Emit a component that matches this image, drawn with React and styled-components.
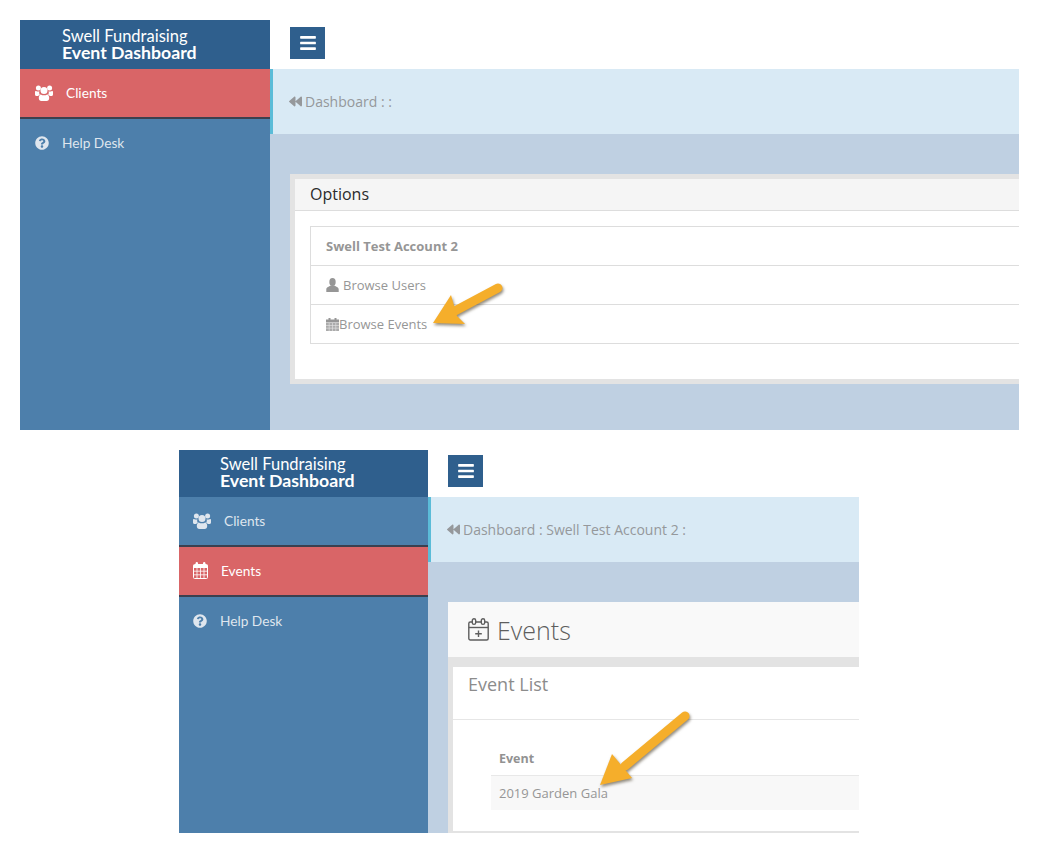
import React from "react";
import styled, { createGlobalStyle } from "styled-components";
import { FaQuestionCircle, FaBackward, FaBars } from "react-icons/fa";

const GlobalStyle = createGlobalStyle`
  html, body { margin: 0; padding: 0; background: #fff; }
  body { font-family: "Open Sans", "Liberation Sans", sans-serif; }
`;

const Page = styled.div`
  width: 1039px;
  height: 853px;
  padding-top: 20px;
  box-sizing: border-box;
  overflow: hidden;
`;

const Shot = styled.section`
  position: relative;
  display: grid;
  grid-template-columns: ${(p) => p.$side}px 1fr;
  width: ${(p) => p.$width}px;
  height: ${(p) => p.$height}px;
  margin-left: ${(p) => p.$left}px;
  margin-bottom: 20px;
  overflow: hidden;
`;

const Sidebar = styled.aside`
  background: #4d7fab;
  display: flex;
  flex-direction: column;
`;

const Brand = styled.div`
  height: ${(p) => p.$height}px;
  box-sizing: border-box;
  background: #2f5f8d;
  color: #fff;
  padding: ${(p) => p.$top + 1}px 0 0 ${(p) => p.$pad}px;
  font-family: Lato, "Liberation Sans", sans-serif;
  font-size: 16.5px;
  line-height: 17px;
  span { display: block; }
  strong { display: block; margin-top: -1px; font-weight: 700; font-size: 17.7px; }
`;

const NavItem = styled.div`
  height: 50px;
  box-sizing: border-box;
  display: flex;
  align-items: center;
  gap: 13px;
  padding: 0 0 1px ${(p) => p.$pad}px;
  font-family: Lato, "Liberation Sans", sans-serif;
  font-size: 13.7px;
  font-weight: 400;
  color: ${(p) => (p.$active ? "#fff" : "#dfe6ee")};
  background: ${(p) => (p.$active ? "#d96567" : "transparent")};
  border-bottom: 2px solid ${(p) => (p.$line ? "#3b404f" : "transparent")};
  svg { flex: none; }
`;

const Main = styled.main`
  display: flex;
  flex-direction: column;
  min-width: 0;
  background: #bfd0e2;
`;

const TopBar = styled.div`
  height: ${(p) => p.$height}px;
  box-sizing: border-box;
  background: #fff;
  padding: ${(p) => p.$top}px 0 0 20px;
`;

const Toggle = styled.button`
  display: flex;
  align-items: center;
  justify-content: center;
  width: 35px;
  height: 32px;
  padding: 0;
  border: 0;
  background: #2f5f8d;
  color: #fff;
  font-size: 18px;
`;

const Crumb = styled.div`
  height: 65px;
  flex: none;
  box-sizing: border-box;
  display: flex;
  align-items: center;
  gap: 3px;
  padding-left: 16px;
  margin-bottom: 40px;
  background: #d9eaf5;
  border-left: 3px solid #5bbcd8;
  color: #95989b;
  font-size: 14px;
  svg { font-size: 13px; }
`;

const Panel = styled.div`
  margin-left: 20px;
  height: 210px;
  box-sizing: border-box;
  border: 5px solid #e3e3e3;
  border-right: 0;
  background: #fff;
`;

const PanelHead = styled.div`
  height: 32px;
  box-sizing: border-box;
  padding: 3px 0 0 15px;
  background: #f5f5f5;
  border-bottom: 1px solid #ddd;
  color: #2b2b2b;
  font-size: 16px;
  line-height: 24px;
`;

const List = styled.div`
  margin: 15px 0 0 15px;
  border: 1px solid #ddd;
  border-right: 0;
`;

const Row = styled.div`
  height: 39px;
  box-sizing: border-box;
  display: flex;
  align-items: center;
  gap: ${(p) => p.$gap || 0}px;
  padding-left: 15px;
  font-size: 13px;
  font-weight: ${(p) => (p.$bold ? 700 : 400)};
  color: #969696;
  &:first-child { height: 38px; }
  & + & { border-top: 1px solid #ddd; }
`;

const TitleBar = styled.div`
  height: 55px;
  flex: none;
  margin-left: 20px;
  display: flex;
  align-items: center;
  gap: 8px;
  padding-left: 20px;
  background: #f9f9f9;
  color: #5e5e5e;
  font-size: 25px;
  font-weight: 300;
`;

const ListCard = styled.div`
  flex: 1;
  margin-left: 20px;
  border-top: 10px solid #e3e3e3;
  border-left: 5px solid #e3e3e3;
  border-bottom: 2px solid #e3e3e3;
  background: #fff;
  display: flex;
  flex-direction: column;
`;

const CardTitle = styled.div`
  height: 53px;
  flex: none;
  box-sizing: border-box;
  padding: 5px 0 0 15px;
  border-bottom: 1px solid #e6e6e6;
  color: #8c8c8c;
  font-size: 18px;
  line-height: 25px;
`;

const Table = styled.div`
  margin: 27px 0 0 38px;
`;

const HeadCell = styled.div`
  height: 29px;
  box-sizing: border-box;
  padding-left: 8px;
  border-bottom: 1px solid #e8e8e8;
  color: #929292;
  font-size: 12.5px;
  font-weight: 700;
  line-height: 24px;
`;

const Cell = styled.div`
  height: 34px;
  box-sizing: border-box;
  padding-left: 8px;
  background: #f8f8f8;
  color: #969696;
  font-size: 13px;
  line-height: 35px;
`;

const ArrowSvg = styled.svg`
  position: absolute;
  left: ${(p) => p.$x}px;
  top: ${(p) => p.$y}px;
  overflow: visible;
  filter: drop-shadow(1px 2px 1.5px rgba(70, 60, 40, 0.6));
`;

function Arrow({ x, y, w, h, tail, neck, head }) {
  return (
    <ArrowSvg $x={x} $y={y} width={w} height={h} viewBox={`0 0 ${w} ${h}`}>
      <line
        x1={tail[0]}
        y1={tail[1]}
        x2={neck[0]}
        y2={neck[1]}
        stroke="#f5ae2b"
        strokeWidth="9"
        strokeLinecap="round"
      />
      <polygon points={head} fill="#f5ae2b" />
    </ArrowSvg>
  );
}

function UsersIcon() {
  return (
    <svg width="18" height="16" viewBox="0 0 18 16" fill="currentColor">
      <circle cx="3.4" cy="3" r="2.5" />
      <circle cx="14.6" cy="3" r="2.5" />
      <path d="M0 6.8C0 6 .7 6 1.5 6.2c1 .4 2 .4 3 .1-.5 1-.4 2.4.3 3.4-.7.2-1.3.8-1.6 1.3H1.5C.6 11 0 10.4 0 9.5z" />
      <path d="M18 6.8c0-.8-.7-.8-1.5-.6-1 .4-2 .4-3 .1.5 1 .4 2.4-.3 3.4.7.2 1.3.8 1.6 1.3h1.7c.9 0 1.5-.6 1.5-1.5z" />
      <circle cx="9" cy="5.6" r="3.5" />
      <path d="M3.8 13c0-1.8.7-3.5 2-3.6 1.8 1.2 4.6 1.2 6.4 0 1.3.1 2 1.8 2 3.6 0 1.8-1 3-2.6 3H6.4c-1.6 0-2.6-1.2-2.6-3z" />
    </svg>
  );
}

function GridCalendarIcon() {
  return (
    <svg width="15" height="17" viewBox="0 0 15 17" fill="none" stroke="currentColor">
      <rect x="0.5" y="2.5" width="14" height="14" rx="1" strokeWidth="1" />
      <path d="M.5 3h14v3H.5z" fill="currentColor" stroke="none" />
      <rect x="2.6" y="0" width="2.4" height="4.5" rx="1.2" fill="currentColor" stroke="none" />
      <rect x="10" y="0" width="2.4" height="4.5" rx="1.2" fill="currentColor" stroke="none" />
      <path d="M.5 9.2h14M.5 12.8h14M4 6v10M7.5 6v10M11 6v10" strokeWidth="0.8" />
    </svg>
  );
}

function UserIcon() {
  return (
    <svg width="13" height="14" viewBox="0 0 13 14" fill="currentColor">
      <ellipse cx="6.5" cy="4" rx="3.2" ry="4" />
      <path d="M.3 14v-2.6C.3 9.2 3 8.8 4.6 7.6h3.8c1.6 1.2 4.3 1.6 4.3 3.8V14z" />
    </svg>
  );
}

function SolidCalendarIcon() {
  return (
    <svg width="13" height="13" viewBox="0 0 13 13" fill="currentColor">
      <rect x="0" y="1.5" width="13" height="3" />
      <rect x="2.5" y="0" width="2" height="3" />
      <rect x="8.5" y="0" width="2" height="3" />
      <rect x="0" y="5" width="13" height="8" opacity="0.8" />
      <path d="M0 7.5h13M0 10.2h13M3.2 5v8M6.5 5v8M9.8 5v8" stroke="#fff" strokeWidth="0.6" opacity="0.7" />
    </svg>
  );
}

function CalendarPlusIcon() {
  return (
    <svg width="21" height="23" viewBox="0 0 21 23" fill="none" stroke="currentColor" strokeWidth="1.4">
      <rect x="0.8" y="4" width="19.4" height="18" rx="1.5" />
      <path d="M.8 9.5h19.4" />
      <rect x="4.3" y="0.8" width="3.4" height="5.6" rx="1.7" fill="#f9f9f9" />
      <rect x="13.3" y="0.8" width="3.4" height="5.6" rx="1.7" fill="#f9f9f9" />
      <path d="M10.5 12.5v6.5M7.2 15.8h6.6" />
    </svg>
  );
}

export default function App() {
  return (
    <Page>
      <GlobalStyle />

      <Shot $left={20} $width={999} $height={410} $side={250}>
        <Sidebar>
          <Brand $height={49} $top={7} $pad={42}>
            <span>Swell Fundraising</span>
            <strong>Event Dashboard</strong>
          </Brand>
          <NavItem $active $line $pad={15}>
            <UsersIcon />
            Clients
          </NavItem>
          <NavItem $pad={15}>
            <FaQuestionCircle size={14} />
            Help Desk
          </NavItem>
        </Sidebar>
        <Main>
          <TopBar $height={49} $top={7}>
            <Toggle>
              <FaBars />
            </Toggle>
          </TopBar>
          <Crumb>
            <FaBackward />
            Dashboard : :
          </Crumb>
          <Panel>
            <PanelHead>Options</PanelHead>
            <List>
              <Row $bold>Swell Test Account 2</Row>
              <Row $gap={4}>
                <UserIcon />
                Browse Users
              </Row>
              <Row>
                <SolidCalendarIcon />
                Browse Events
              </Row>
            </List>
          </Panel>
        </Main>
        <Arrow
          x={405}
          y={260}
          w={85}
          h={55}
          tail={[73, 8]}
          neck={[28, 32]}
          head="26,15 8,43 40,44 32,36"
        />
      </Shot>

      <Shot $left={179} $width={680} $height={383} $side={249}>
        <Sidebar>
          <Brand $height={47} $top={5} $pad={41}>
            <span>Swell Fundraising</span>
            <strong>Event Dashboard</strong>
          </Brand>
          <NavItem $line $pad={14}>
            <UsersIcon />
            Clients
          </NavItem>
          <NavItem $active $line $pad={14}>
            <GridCalendarIcon />
            Events
          </NavItem>
          <NavItem $pad={14}>
            <FaQuestionCircle size={14} />
            Help Desk
          </NavItem>
        </Sidebar>
        <Main>
          <TopBar $height={47} $top={5}>
            <Toggle>
              <FaBars />
            </Toggle>
          </TopBar>
          <Crumb>
            <FaBackward />
            Dashboard : Swell Test Account 2 :
          </Crumb>
          <TitleBar>
            <CalendarPlusIcon />
            Events
          </TitleBar>
          <ListCard>
            <CardTitle>Event List</CardTitle>
            <Table>
              <HeadCell>Event</HeadCell>
              <Cell>2019 Garden Gala</Cell>
            </Table>
          </ListCard>
        </Main>
        <Arrow
          x={411}
          y={256}
          w={110}
          h={90}
          tail={[95, 10]}
          neck={[35, 60]}
          head="22,48 10,79 42,72"
        />
      </Shot>
    </Page>
  );
}
